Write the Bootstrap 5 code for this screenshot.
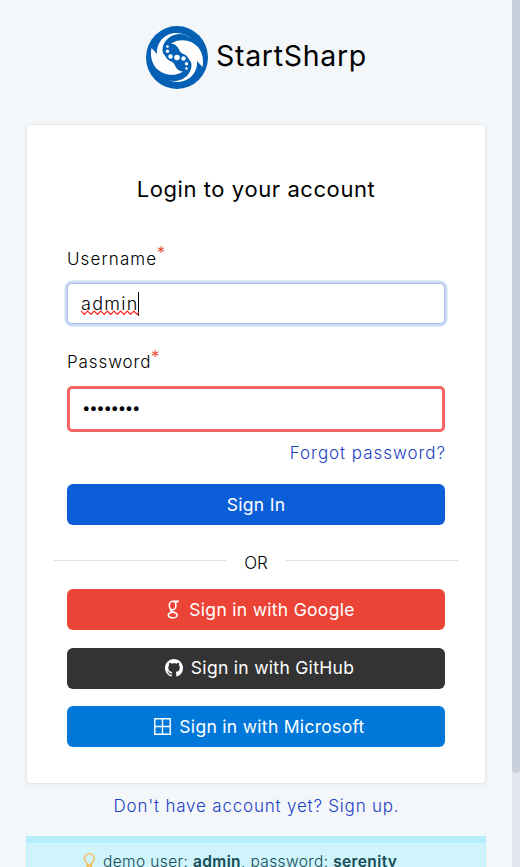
<!DOCTYPE html>
<html lang="en">
<head>
<meta charset="utf-8">
<meta name="viewport" content="width=device-width, initial-scale=1">
<title>StartSharp - Login</title>
<link href="https://cdn.jsdelivr.net/npm/bootstrap@5.3.0/dist/css/bootstrap.min.css" rel="stylesheet">
<style>
body{font-family:Inter,"Open Sans",sans-serif;font-size:17px;font-weight:300;color:#000;background:#f3f7fa;height:867px}
a{color:#1c3fc4;text-decoration:none}
.page-area{padding:26px 26px 0;min-width:0}
.brand-row{height:63px;margin-bottom:35px;gap:8px;padding-left:1px}
.brand-name{font-size:28.5px;font-weight:400;line-height:60px;letter-spacing:.7px}
.login-card{height:660px;border:1px solid #e4e8eb;border-radius:5px;padding:0 40px;box-shadow:0 2px 4px rgba(30,41,59,.04)}
.login-title{font-size:22px;font-weight:400;line-height:30px;margin:49px 0 40px;letter-spacing:.58px}
.field-label{height:39px;line-height:30px;letter-spacing:1.1px}
.field-label.pass{height:38px;letter-spacing:.9px;line-height:28px}
.req{color:#e8452f;font-size:17px;line-height:14px;top:2px;margin-left:-.5px;letter-spacing:0}
.form-control{height:41px;border-color:#a9bfdd;border-radius:5px;padding:0 13px;font-size:18px;font-weight:300;color:#000}
.is-focused{box-shadow:0 0 0 2.5px #cbdcf4;border-color:#a9bfdd;letter-spacing:1.25px}
.is-missing{height:46px;border:3px solid #f46666;padding:0 13px;border-radius:5px}
.caret{width:1px;height:24px;background:#000}
.squiggle{left:0;top:20px}
.dots{font-size:15px;font-weight:400;letter-spacing:-1.3px;line-height:20px;margin:-3px 0 0 -1px}
.forgot{height:52px;line-height:42px;letter-spacing:.95px}
.forgot a{margin-right:-.9px}
.btn{height:41px;padding:0;border:0;border-radius:6px;font-size:17.5px;font-weight:400;color:#fff;line-height:40px;letter-spacing:.3px}
.btn svg{margin-right:8px}
.providers .btn{padding-left:7px}
.providers .btn-google{padding-left:10px}
.btn-google svg{margin-right:9px!important}
.btn-signin{background:#0b5ed7}
.btn-google{background:#ec4337}
.btn-github{background:#333}
.btn-ms{background:#0078d9}
.or-row{margin:25px -13px 12px;height:27px;gap:18px}
.or-row i{height:1px;background:#dee0e2;flex:1;margin-top:-6px}
.providers{gap:17.6px}
.signup{height:36px;line-height:45px;letter-spacing:.8px;padding-left:1px}
.hint{height:60px;background:#cff4fc;border:1px solid #b6effb;border-top-width:7px;color:#164b55;font-size:15.5px;letter-spacing:.38px;padding:7px 0 0 55px;margin-top:16px}
.hint b{font-weight:600}
.hint svg{margin:3px 7px 0 1px}
.scroll-track{width:8px;background:#e2e7ef}
.scroll-thumb{height:773px;background:#c9d0db;border-radius:0 0 4px 4px}
</style>
</head>
<body class="d-flex overflow-hidden">
<main class="page-area flex-grow-1">
  <div class="brand-row d-flex justify-content-center">
    <svg width="62" height="63" viewBox="0 0 62 63">
      <ellipse cx="31" cy="31.5" rx="31" ry="31.5" fill="#0460b4"/>
      <g fill="#fff">
        <path id="swirl" d="M46 13.500C37 4.500 22 5 14.500 15C11.500 19 10.500 24 11 28L5.500 22C3.500 32 7 42 16 46.500C23 50 31 49.500 37 45.500C32 45 30 42 28.500 38.500C27 34.500 21.500 35.500 19.500 30.500C18.500 28 16.500 28 16.500 24C16.500 16 23 9 32 8C37 7.500 41 9 46 13.500Z"/>
        <use href="#swirl" transform="rotate(180 31 31.5)"/>
        <circle cx="31" cy="31.500" r="2.800"/><circle cx="24.500" cy="30.500" r="2.200"/><circle cx="37.500" cy="32.500" r="2.200"/>
        <circle cx="21.500" cy="25.300" r="1.700"/><circle cx="21.500" cy="20.500" r="1.300"/>
        <circle cx="40.500" cy="37.700" r="1.700"/><circle cx="40.500" cy="42.500" r="1.300"/>
      </g>
    </svg>
    <div class="brand-name">StartSharp</div>
  </div>
  <section class="login-card bg-white">
    <h1 class="login-title text-center">Login to your account</h1>
    <div class="field-label d-flex"><span>Username</span><sup class="req">*</sup></div>
    <div class="form-control is-focused d-flex align-items-center">
      <span class="position-relative">admin
        <svg class="squiggle position-absolute" width="58" height="6" viewBox="0 0 58 6" fill="none" stroke="#f22" stroke-width="1.200"><path d="M0 1l3.300 3.500L6.600 1l3.300 3.500L13.200 1l3.300 3.500L19.800 1l3.300 3.500L26.400 1l3.300 3.500L33 1l3.300 3.500L39.600 1l3.300 3.500L46.200 1l3.300 3.500L52.800 1l3.300 3.500L58 2.500"/></svg>
      </span><span class="caret"></span>
    </div>
    <div class="field-label pass d-flex mt-4"><span>Password</span><sup class="req">*</sup></div>
    <div class="form-control is-missing d-flex align-items-center"><span class="dots">••••••••</span></div>
    <div class="forgot text-end"><a href="#">Forgot password?</a></div>
    <button class="btn btn-signin w-100 d-block">Sign In</button>
    <div class="or-row d-flex align-items-center"><i></i><span>OR</span><i></i></div>
    <div class="d-grid providers">
      <button class="btn btn-google d-flex align-items-center justify-content-center">
        <svg width="13" height="19" viewBox="0 0 13 19" fill="none" stroke="#fff" stroke-width="1.600"><ellipse cx="5.600" cy="5.500" rx="3.300" ry="4.200"/><path d="M6 1.200H12M9 1.300Q10 2 9.700 3"/><path d="M4 9.200Q2.800 10.500 5 11.500L8 12.700C12 14.500 10 18 6 18C1.500 18 .2 15 2.500 13.200Q4 12.200 6 12.200"/></svg><span>Sign in with Google</span></button>
      <button class="btn btn-github d-flex align-items-center justify-content-center">
        <svg width="18" height="18" viewBox="0 0 16 16" fill="#fff"><path d="M8 0C3.580 0 0 3.580 0 8c0 3.540 2.290 6.530 5.470 7.590.4.070.55-.17.55-.38 0-.19-.01-.82-.01-1.490-2.010.37-2.530-.49-2.690-.94-.09-.23-.48-.94-.82-1.130-.28-.15-.68-.52-.01-.53.63-.01 1.080.58 1.230.82.72 1.210 1.870.87 2.330.66.07-.52.28-.87.51-1.070-1.780-.2-3.640-.89-3.640-3.950 0-.87.31-1.590.82-2.150-.08-.2-.36-1.020.08-2.120 0 0 .67-.21 2.200.82.64-.18 1.320-.27 2-.27s1.360.09 2 .27c1.530-1.040 2.200-.82 2.200-.82.44 1.100.16 1.920.08 2.120.51.56.82 1.270.82 2.150 0 3.070-1.870 3.750-3.650 3.950.29.25.54.73.54 1.480 0 1.070-.01 1.930-.01 2.200 0 .21.150.46.55.38A8.010 8.010 0 0 0 16 8c0-4.420-3.580-8-8-8z"/></svg><span>Sign in with GitHub</span></button>
      <button class="btn btn-ms d-flex align-items-center justify-content-center">
        <svg width="17" height="17" viewBox="0 0 17 17" fill="none" stroke="#fff" stroke-width="1.400"><path d="M.8.800H16.200V16.200H.8ZM8.500.800V16.200M.8 8.500H16.200"/></svg><span>Sign in with Microsoft</span></button>
    </div>
  </section>
  <div class="signup text-center"><a href="#">Don't have account yet? Sign up.</a></div>
  <div class="hint d-flex">
    <svg width="13" height="18" viewBox="0 0 14 19" fill="none" stroke="#fdb441" stroke-width="1.300"><path d="M4.500 12C4.500 10 1.500 8.500 1.500 5.800a5.300 5.300 0 0 1 10.600 0C12.100 8.500 9.200 10 9.200 12ZM4.500 12V15.500L7 17.500L9.200 15.500V12M4.500 14H9.200"/></svg>
    <span>demo user: <b>admin</b>, password: <b>serenity</b></span>
  </div>
</main>
<aside class="scroll-track flex-shrink-0"><div class="scroll-thumb"></div></aside>
<script src="https://cdn.jsdelivr.net/npm/bootstrap@5.3.0/dist/js/bootstrap.bundle.min.js"></script>
</body>
</html>
